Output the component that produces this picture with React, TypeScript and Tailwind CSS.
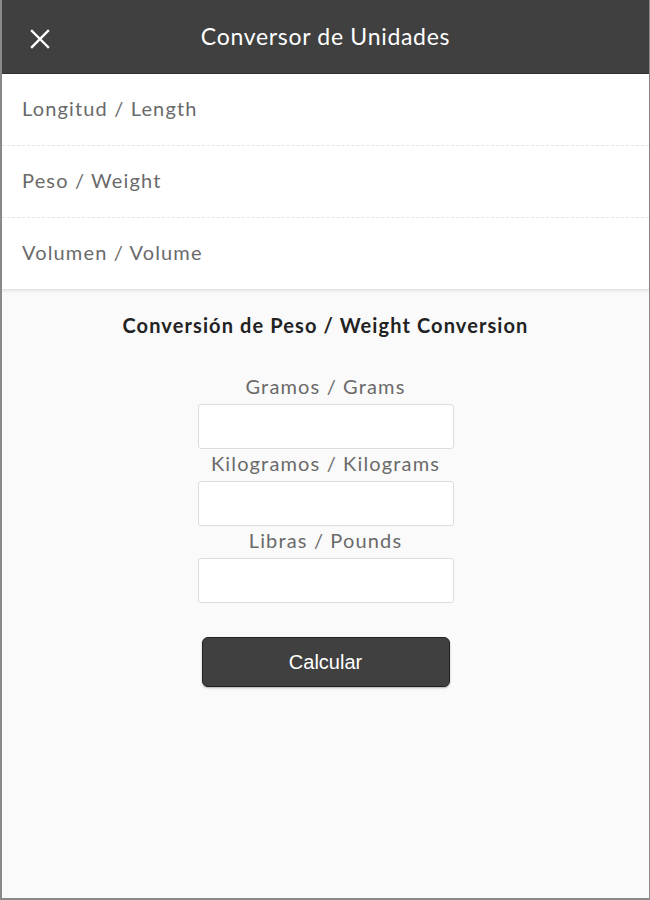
import React from "react";

export default function App() {
  const items = ["Longitud / Length", "Peso / Weight", "Volumen / Volume"];
  const fields = ["Gramos / Grams", "Kilogramos / Kilograms", "Libras / Pounds"];
  return (
    <div className="w-[650px] h-[900px] bg-[#fafafa] border-l-2 border-r border-b-2 border-[#8a8a8a] flex flex-col font-['Lato',sans-serif]">
      <header className="h-[74px] bg-[#404040] border-b border-[#2e2e2e] relative flex items-center justify-center shrink-0">
        <button className="absolute left-[27px] top-[28px] w-[22px] h-[22px] flex items-center justify-center">
          <svg width="20" height="20" viewBox="0 0 20 20" fill="none" stroke="#ffffff" strokeWidth="2.4" strokeLinecap="square">
            <path d="M2 2 L18 18 M18 2 L2 18" />
          </svg>
        </button>
        <h1 className="text-white text-[23px] tracking-[0.7px] pb-[1px]">Conversor de Unidades</h1>
      </header>
      <nav className="bg-white shadow-[0_2px_2px_rgba(0,0,0,0.06)] shrink-0">
        {items.map((t, i) => (
          <div
            key={t}
            className={`h-[72px] flex items-center pl-5 pb-[3px] text-[20px] tracking-[1.15px] text-[#6a6a6a] ${i < 2 ? "border-b border-dashed border-[#e4e4e4]" : "border-b border-[#e4e4e4]"}`}
          >
            {t}
          </div>
        ))}
      </nav>
      <main className="flex flex-col items-center">
        <h2 className="mt-[24px] h-[22px] leading-[22px] text-[20px] tracking-[1.1px] font-bold text-[#222]">
          Conversión de Peso / Weight Conversion
        </h2>
        <div className="mt-[36px] flex flex-col items-center">
          {fields.map((f) => (
            <div key={f} className="flex flex-col items-center">
              <label className="h-[32px] leading-[28px] text-[20px] tracking-[1.15px] text-[#6a6a6a]">{f}</label>
              <input className="w-[256px] h-[45px] bg-white border border-[#dcdcdc] rounded-[3px] outline-none" />
            </div>
          ))}
        </div>
        <button
          className="mt-[34px] w-[248px] h-[50px] bg-[#404040] border border-[#222] rounded-[6px] text-white text-[20px] shadow-[0_1px_2px_rgba(0,0,0,0.3)]"
          style={{ fontFamily: "'Liberation Sans', Arial, sans-serif" }}
        >
          Calcular
        </button>
      </main>
    </div>
  );
}
